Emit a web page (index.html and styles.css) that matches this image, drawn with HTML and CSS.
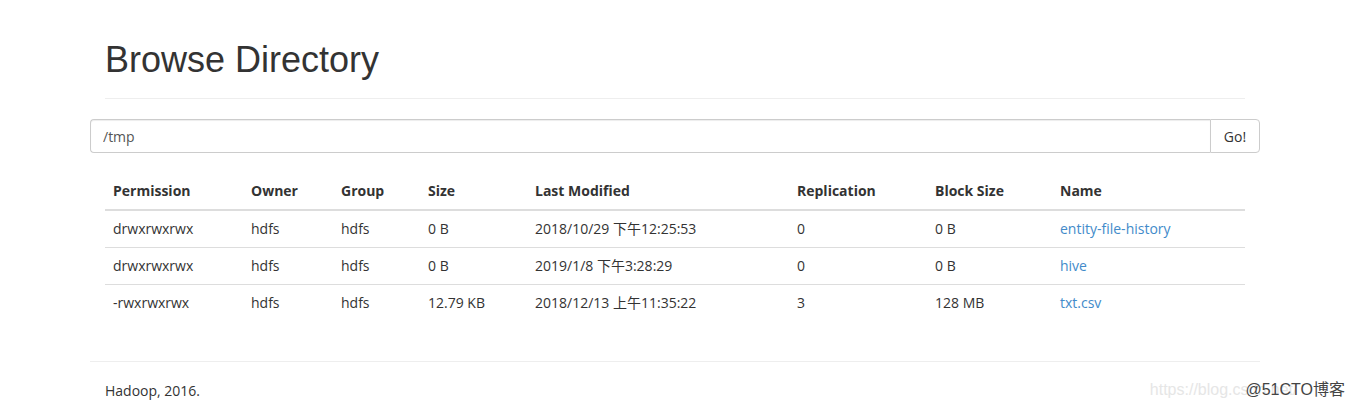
FILE: index.html
```html
<!DOCTYPE html>
<html>
<head>
<meta charset="utf-8">
<link rel="stylesheet" href="styles.css">
</head>
<body>
<div class="page">
  <div class="container">
    <div class="page-header">
      <h1>Browse Directory</h1>
    </div>
    <form class="input-group">
      <input class="path-input" type="text" value="/tmp">
      <button class="go-btn" type="button">Go!</button>
    </form>
    <div class="table-wrap">
      <table class="listing">
        <thead>
          <tr>
            <th class="c-perm">Permission</th>
            <th class="c-owner">Owner</th>
            <th class="c-group">Group</th>
            <th class="c-size">Size</th>
            <th class="c-mod">Last Modified</th>
            <th class="c-rep">Replication</th>
            <th class="c-block">Block Size</th>
            <th class="c-name">Name</th>
          </tr>
        </thead>
        <tbody>
          <tr>
            <td>drwxrwxrwx</td><td>hdfs</td><td>hdfs</td><td>0 B</td>
            <td>2018/10/29 下午12:25:53</td><td>0</td><td>0 B</td>
            <td><a href="#">entity-file-history</a></td>
          </tr>
          <tr>
            <td>drwxrwxrwx</td><td>hdfs</td><td>hdfs</td><td>0 B</td>
            <td>2019/1/8 下午3:28:29</td><td>0</td><td>0 B</td>
            <td><a href="#">hive</a></td>
          </tr>
          <tr>
            <td>-rwxrwxrwx</td><td>hdfs</td><td>hdfs</td><td>12.79 KB</td>
            <td>2018/12/13 上午11:35:22</td><td>3</td><td>128 MB</td>
            <td><a href="#">txt.csv</a></td>
          </tr>
        </tbody>
      </table>
    </div>
    <hr class="footer-rule">
    <div class="footer">Hadoop, 2016.</div>
  </div>
  <div class="watermark"><span class="wm-url">https://blog.csdn.net/</span><span class="wm-brand">@51CTO博客</span></div>
</div>
</body>
</html>
```

FILE: styles.css
```css
* { box-sizing: border-box; }
html, body { margin: 0; padding: 0; background: #fff; }
body {
  font-family: "Open Sans", "Noto Sans CJK SC", sans-serif;
  font-size: 14px;
  color: #333;
  line-height: 1.42857;
}
.page {
  position: relative;
  width: 1354px;
  height: 407px;
  overflow: hidden;
  padding-right: 4px;
}
.container {
  width: 1170px;
  margin: 0 auto;
}
.page-header {
  margin: 40px 15px 20px;
  padding-bottom: 18px;
  border-bottom: 1px solid #eee;
}
.page-header h1 {
  margin: 0;
  font-family: "Liberation Sans", Arial, sans-serif;
  font-size: 36px;
  font-weight: 400;
  line-height: 40px;
  color: #333;
}
.input-group {
  display: flex;
  margin: 0;
  height: 34px;
}
.path-input {
  flex: 1;
  height: 34px;
  padding: 6px 12px;
  border: 1px solid #ccc;
  border-right: 0;
  border-radius: 4px 0 0 4px;
  font-family: "Open Sans", sans-serif;
  font-size: 14px;
  color: #555;
  box-shadow: inset 0 1px 1px rgba(0,0,0,.075);
  outline: none;
}
.go-btn {
  width: 50px;
  height: 34px;
  border: 1px solid #ccc;
  border-radius: 0 4px 4px 0;
  background: #fff;
  font-family: "Open Sans", sans-serif;
  font-size: 14px;
  color: #333;
  padding: 0;
}
.table-wrap {
  padding: 0 15px;
  margin-top: 20px;
}
.listing {
  width: 100%;
  border-collapse: collapse;
  table-layout: fixed;
  margin-bottom: 40px;
}
.listing th, .listing td {
  padding: 8px;
  text-align: left;
  line-height: 20px;
  white-space: nowrap;
}
.listing th {
  font-weight: 700;
  border-bottom: 2px solid #ddd;
}
.listing td { border-top: 1px solid #ddd; }
.listing tbody tr:first-child td { border-top: 0; }
.listing a { color: #428bca; text-decoration: none; }
.c-perm { width: 138px; }
.c-owner { width: 90px; }
.c-group { width: 87px; }
.c-size { width: 107px; }
.c-mod { width: 262px; }
.c-rep { width: 138px; }
.c-block { width: 125px; }
.footer-rule {
  margin: 0;
  border: 0;
  border-top: 1px solid #eee;
}
.footer {
  padding: 19px 15px;
}
.watermark {
  position: absolute;
  right: 9px;
  bottom: 5px;
  font-family: "Liberation Sans", "Noto Sans CJK SC", sans-serif;
  font-size: 16px;
  white-space: nowrap;
}
.wm-url { color: #e6e6e6; margin-right: -52px; }
.wm-brand { color: #444; position: relative; }
```
